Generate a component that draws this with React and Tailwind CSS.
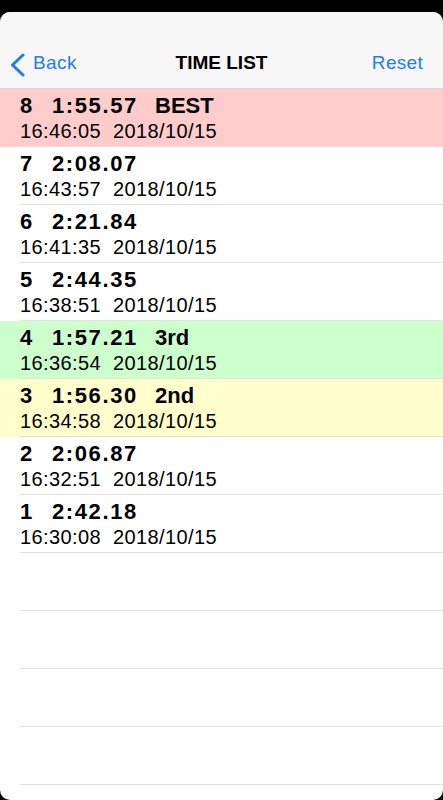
import React from "react";

const rows = [
  { n: 8, t: "1:55.57", tag: "BEST", time: "16:46:05", bg: "bg-[#ffcccc]" },
  { n: 7, t: "2:08.07", tag: "", time: "16:43:57", bg: "bg-white" },
  { n: 6, t: "2:21.84", tag: "", time: "16:41:35", bg: "bg-white" },
  { n: 5, t: "2:44.35", tag: "", time: "16:38:51", bg: "bg-white" },
  { n: 4, t: "1:57.21", tag: "3rd", time: "16:36:54", bg: "bg-[#ccffcc]" },
  { n: 3, t: "1:56.30", tag: "2nd", time: "16:34:58", bg: "bg-[#ffffcc]" },
  { n: 2, t: "2:06.87", tag: "", time: "16:32:51", bg: "bg-white" },
  { n: 1, t: "2:42.18", tag: "", time: "16:30:08", bg: "bg-white" },
];

export default function App() {
  return (
    <div className="w-[443px] h-[800px] bg-black pt-[12px] overflow-hidden" style={{ fontFamily: '"Liberation Sans", Arial, sans-serif' }}>
      <div className="h-[788px] bg-white rounded-[10px] overflow-hidden flex flex-col">
        <div className="h-[77px] bg-[#f7f7f7] border-b border-[#d8d8d8] flex items-end pb-[13px] relative">
          <div className="flex items-center h-[24px] pl-[10px] text-[#1a7ef6] text-[19px] leading-[24px]">
            <svg width="15" height="24" viewBox="0 0 15 24" className="mr-[8px] translate-y-[2px]">
              <path d="M13 2 L2.5 12 L13 22" fill="none" stroke="#1a7ef6" strokeWidth="3" strokeLinecap="round" strokeLinejoin="round" />
            </svg>
            <span className="tracking-[0.4px]">Back</span>
          </div>
          <div className="absolute left-0 right-0 bottom-[13px] text-center text-[19px] font-bold text-black pointer-events-none leading-[24px]">TIME LIST</div>
          <div className="ml-auto pr-[20px] text-[#1a7ef6] text-[19px] leading-[24px] tracking-[0.3px]">Reset</div>
        </div>
        <div className="flex flex-col">
          {rows.map((r) => (
            <div key={r.n} className={`${r.bg} h-[58px] relative`}>
              <div className="pl-[20px] pt-[3px]">
                <div className="flex text-[22px] font-bold leading-[27px] text-black whitespace-pre">
                  <span className="w-[32px]">{r.n}</span>
                  <span className="tracking-[1.6px] w-[103px]">{r.t}</span>
                  {r.tag ? <span>{r.tag}</span> : null}
                </div>
                <div className="text-[20px] leading-[24px] text-black whitespace-pre tracking-[0.4px]">{`${r.time}  2018/10/15`}</div>
              </div>
              <div className="absolute left-[20px] right-0 bottom-0 h-px bg-[#e2e2e2]"></div>
            </div>
          ))}
          {[0, 1, 2, 3].map((i) => (
            <div key={i} className="h-[58px] relative bg-white">
              <div className="absolute left-[20px] right-0 bottom-0 h-px bg-[#e2e2e2]"></div>
            </div>
          ))}
        </div>
      </div>
    </div>
  );
}
